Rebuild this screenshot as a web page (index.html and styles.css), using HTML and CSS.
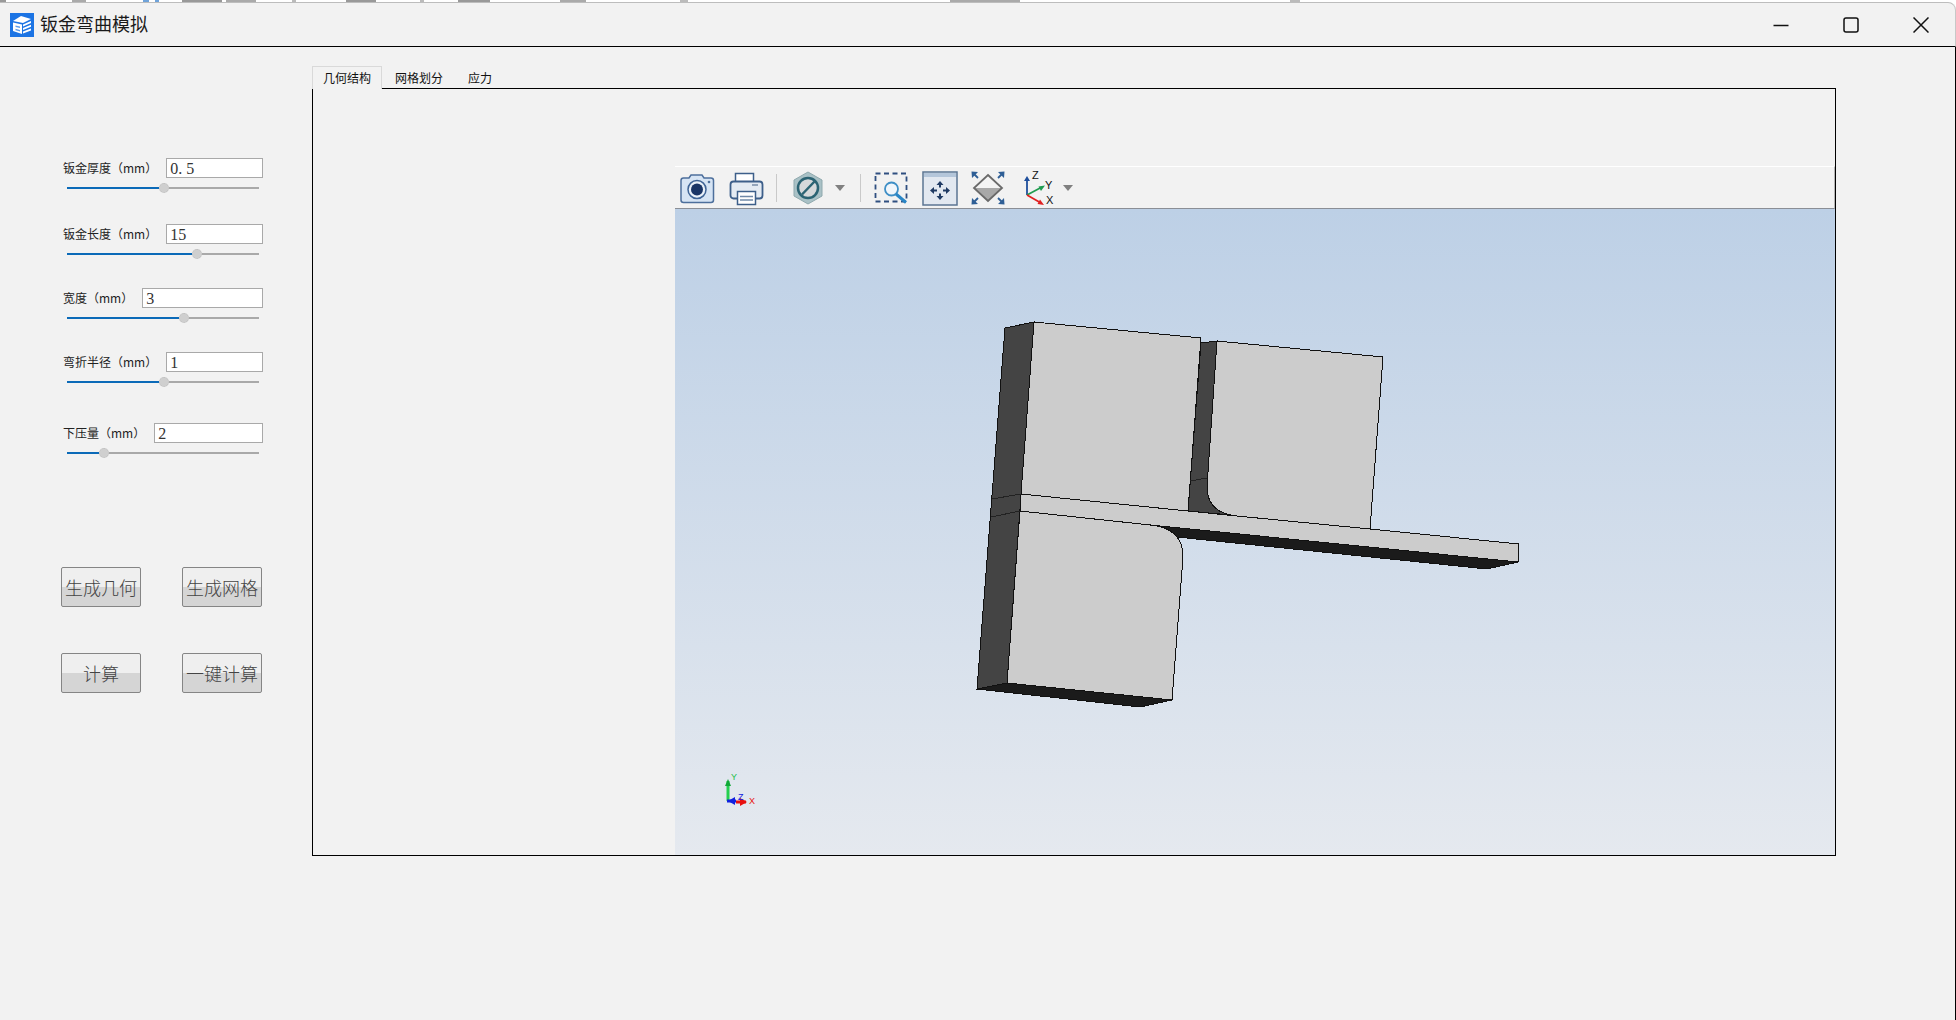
FILE: index.html
```html
<!DOCTYPE html>
<html lang="zh-CN">
<head>
<meta charset="utf-8">
<title>钣金弯曲模拟</title>
<link rel="stylesheet" href="styles.css">
</head>
<body>
<div class="app">
  <svg class="behind" viewBox="0 0 1956 2" preserveAspectRatio="none" aria-hidden="true">
    <rect x="0" width="6" height="2" fill="#999"/><rect x="72" width="14" height="2" fill="#aaa"/>
    <rect x="143" width="6" height="2" fill="#6fa3da"/><rect x="155" width="4" height="2" fill="#6fa3da"/>
    <rect x="182" width="40" height="2" fill="#999"/><rect x="226" width="30" height="2" fill="#aaa"/>
    <rect x="292" width="4" height="2" fill="#bbb"/><rect x="346" width="30" height="2" fill="#999"/>
    <rect x="420" width="4" height="2" fill="#bbb"/><rect x="458" width="32" height="2" fill="#999"/>
    <rect x="560" width="26" height="2" fill="#aaa"/><rect x="680" width="8" height="2" fill="#bbb"/>
    <rect x="950" width="70" height="2" fill="#aaa"/><rect x="1290" width="10" height="2" fill="#bbb"/>
  </svg>
  <header class="titlebar">
    <svg class="app-icon" viewBox="0 0 24 24" aria-hidden="true">
      <rect width="24" height="24" fill="#1c74e4"/>
      <path d="M3 8 L11 3 L21 6 L13 10 Z" fill="#fff"/>
      <path d="M3 9.500 L12 11.500 V21 L3 18 Z" fill="#fff"/>
      <path d="M5.500 12.500 L10 13.500 V15 L5.500 14 Z M5.500 15.800 L10 17 V18.500 L5.500 17.300 Z" fill="#5d9cec"/>
      <path d="M13 11.500 L21 8 V10 L13 13.500 Z M13 15 L21 11.800 V13.800 L13 17 Z M13 18.500 L21 15.500 V17.500 L13 20.500 Z" fill="#fff"/>
    </svg>
    <h1 class="title">钣金弯曲模拟</h1>
    <div class="win-controls">
      <svg class="win-btn" viewBox="0 0 16 16" aria-hidden="true"><path d="M0.500 8.500H15.500" class="win-stroke"/></svg>
      <svg class="win-btn" viewBox="0 0 16 16" aria-hidden="true"><rect x="1" y="1" width="14" height="14" rx="2" class="win-stroke"/></svg>
      <svg class="win-btn" viewBox="0 0 16 16" aria-hidden="true"><path d="M0.500 0.500L15.500 15.500M15.500 0.500L0.500 15.500" class="win-stroke"/></svg>
    </div>
  </header>
  <main class="main">
    <aside class="sidebar">
      <div class="params">
        <section class="param param-first">
          <div class="param-row"><span class="param-label">钣金厚度（mm）</span><span class="field">0. 5</span></div>
          <div class="slider"><span class="slider-fill" style="width:92px"></span><span class="slider-thumb"></span><span class="slider-rest"></span></div>
        </section>
        <section class="param">
          <div class="param-row"><span class="param-label">钣金长度（mm）</span><span class="field">15</span></div>
          <div class="slider"><span class="slider-fill" style="width:125px"></span><span class="slider-thumb"></span><span class="slider-rest"></span></div>
        </section>
        <section class="param">
          <div class="param-row"><span class="param-label">宽度（mm）</span><span class="field">3</span></div>
          <div class="slider"><span class="slider-fill" style="width:112px"></span><span class="slider-thumb"></span><span class="slider-rest"></span></div>
        </section>
        <section class="param param-wide">
          <div class="param-row"><span class="param-label">弯折半径（mm）</span><span class="field">1</span></div>
          <div class="slider"><span class="slider-fill" style="width:92px"></span><span class="slider-thumb"></span><span class="slider-rest"></span></div>
        </section>
        <section class="param">
          <div class="param-row"><span class="param-label">下压量（mm）</span><span class="field">2</span></div>
          <div class="slider"><span class="slider-fill" style="width:32px"></span><span class="slider-thumb"></span><span class="slider-rest"></span></div>
        </section>
      </div>
      <div class="actions">
        <button class="action">生成几何</button>
        <button class="action">生成网格</button>
        <button class="action">计算</button>
        <button class="action">一键计算</button>
      </div>
    </aside>
    <section class="workspace">
      <nav class="tabs">
        <span class="tab tab-active">几何结构</span>
        <span class="tab">网格划分</span>
        <span class="tab">应力</span>
      </nav>
      <div class="pane">
        <div class="viewer">
          <div class="toolbar">
            <svg class="tool" viewBox="0 0 38 38" aria-hidden="true">
              <path d="M3 11.500 Q3 9 5.500 9 H11 L13 6 H24 L26 9 H33 Q35.500 9 35.500 11.500 V31 Q35.500 33.500 33 33.500 H5.500 Q3 33.500 3 31 Z" fill="#d6e4f4" stroke="#4d6f9c" stroke-width="1.500"/>
              <circle cx="19" cy="20.500" r="9" fill="#eaf1f9" stroke="#3f6496" stroke-width="1.500"/>
              <circle cx="19" cy="20.500" r="6" fill="#1a3566"/>
              <circle cx="31" cy="13" r="1.300" fill="#4d6f9c"/>
            </svg>
            <svg class="tool tool-near" viewBox="0 0 38 38" aria-hidden="true">
              <rect x="9.500" y="4.500" width="18" height="11" fill="#fff" stroke="#3d5f8a" stroke-width="1.500"/>
              <rect x="4.500" y="12.500" width="32" height="17" rx="3" fill="#e4ebf3" stroke="#3d5f8a" stroke-width="1.800"/>
              <path d="M26 16H32" stroke="#7a8ea8" stroke-width="1.500"/>
              <rect x="11.500" y="22.500" width="18" height="13" fill="#fff" stroke="#3d5f8a" stroke-width="1.500"/>
              <path d="M14 27.500H27M14 31H27" stroke="#6f89a8" stroke-width="1.500"/>
            </svg>
            <span class="tool-sep"></span>
            <svg class="tool tool-far" viewBox="0 0 38 38" aria-hidden="true">
              <path d="M19 3 L33 11 V27 L19 35 L5 27 V11 Z" fill="#a9c1c6" stroke="#8fa9ae" stroke-width="1"/>
              <circle cx="19" cy="19" r="10" fill="#d5d8da" stroke="#2b6373" stroke-width="2.500"/>
              <path d="M13 25.500 L25.500 12.500" stroke="#2b6373" stroke-width="2.500"/>
            </svg>
            <svg class="caret" viewBox="0 0 10 6" aria-hidden="true"><path d="M0 0H10L5 6Z" fill="#808080"/></svg>
            <span class="tool-sep tool-sep-wide"></span>
            <svg class="tool tool-far" viewBox="0 0 38 38" aria-hidden="true">
              <rect x="2.500" y="4.500" width="31" height="28" fill="none" stroke="#2f4f80" stroke-width="1.800" stroke-dasharray="5 3.500"/>
              <circle cx="18.500" cy="20" r="6.500" fill="#f1f6fb" stroke="#3f8fc6" stroke-width="1.800"/>
              <path d="M23 25 L33 33.500" stroke="#2a86c6" stroke-width="3"/>
            </svg>
            <svg class="tool tool-near" viewBox="0 0 38 38" aria-hidden="true">
              <rect x="2" y="3" width="34" height="33" fill="#e2e8f0" stroke="#5b7593" stroke-width="1.500"/>
              <rect x="3" y="4" width="32" height="4" fill="#b4c6da"/>
              <path d="M19 12 L22.500 16 H20 V18.500 H18 V16 H15.500 Z M19 31 L15.500 27 H18 V24.500 H20 V27 H22.500 Z M9 21.500 L13 18 V20.500 H16 V22.500 H13 V25 Z M29 21.500 L25 25 V22.500 H22 V20.500 H25 V18 Z" fill="#1f3a63"/>
            </svg>
            <svg class="tool tool-near" viewBox="0 0 38 38" aria-hidden="true">
              <path d="M19 6 L33 19 H5 Z" fill="#f4f4f4"/>
              <path d="M5 19 H33 L19 32 Z" fill="#a8a8a8"/>
              <path d="M19 6 L33 19 L19 32 L5 19 Z" fill="none" stroke="#6a6a6a" stroke-width="1.800"/>
              <path d="M2.500 2.500 L9 3 L3 9 Z M35.500 2.500 L29 3 L35 9 Z M2.500 35.500 L3 29 L9 35 Z M35.500 35.500 L35 29 L29 35 Z" fill="#2f5f96"/>
              <path d="M5 5 L9 9 M33 5 L29 9 M5 33 L9 29 M33 33 L29 29" stroke="#2f5f96" stroke-width="1.800"/>
            </svg>
            <svg class="tool tool-mid" viewBox="0 0 38 38" aria-hidden="true">
              <path d="M9 26 V9" stroke="#1f4f9c" stroke-width="1.800"/><path d="M9 7 L12 12 H6 Z" fill="#1f4f9c"/>
              <path d="M9 26 L24 18" stroke="#1f9c4f" stroke-width="1.800"/><path d="M27 16.500 L23 22 L20.500 17.500 Z" fill="#1f9c4f"/>
              <path d="M9 26 L23 34" stroke="#e02020" stroke-width="1.800"/><path d="M26 36 L19.500 35 L22 30.500 Z" fill="#e02020"/>
              <text x="14" y="10" class="axis-label">Z</text>
              <text x="27" y="20" class="axis-label">Y</text>
              <text x="28" y="35" class="axis-label">X</text>
            </svg>
            <svg class="caret caret-axes" viewBox="0 0 10 6" aria-hidden="true"><path d="M0 0H10L5 6Z" fill="#808080"/></svg>
          </div>
          <svg class="scene" viewBox="675 209 1160 646" shape-rendering="crispEdges" aria-hidden="true">
            <defs>
              <linearGradient id="sky" x1="0" y1="0" x2="0" y2="1">
                <stop offset="0" stop-color="#bdd0e6"/>
                <stop offset="1" stop-color="#e5e9ef"/>
              </linearGradient>
            </defs>
            <rect x="675" y="209" width="1160" height="646" fill="url(#sky)"/>
            <g class="edge">
              <path class="face-dark" d="M1005 328 L1034 322 L1007 683 L977 689 Z"/>
              <path class="face-dark" d="M1201 343 L1217 341 L1207 487 Q1209 507 1230 515 L1188 511 Z"/>
              <path class="face-light" d="M1034 322 L1201 338 L1188 511 L1021 494 Z"/>
              <path class="face-light" d="M1217 341 L1383 357 L1370 529 L1237 516 Q1207 513 1207 487 Z"/>
              <path class="face-black" d="M1160 526 L1518 562 L1487 569 L1177 537 Q1172 530 1160 526 Z"/>
              <path class="face-black" d="M1007 683 L1172 700 L1140 707 L977 689 Z"/>
              <path class="face-light" d="M1021 494 L1188 511 L1237 516 L1370 529 L1519 544 L1518 562 L1160 526 L1020 511 Z"/>
              <path class="face-light" d="M1020 511 L1150 525 Q1183 528 1183 557 L1172 700 L1007 683 Z"/>
              <path class="seam" d="M992 499 L1021 494 M991 517 L1020 511 M1190 481 L1207 478"/>
            </g>
            <g class="triad" shape-rendering="auto">
              <path d="M728 801 V781" stroke="#25d050" stroke-width="3"/><path d="M728 779 L731 786 H725 Z" fill="#11a838"/>
              <path d="M727 801 H736" stroke="#1020e0" stroke-width="3"/><path d="M728 801 L735 797 V805 Z" fill="#1020e0"/>
              <path d="M736 802 H746" stroke="#e81010" stroke-width="3"/><path d="M747 802 L740 798 V806 Z" fill="#e81010"/>
              <text x="731" y="780" class="triad-label triad-y">Y</text>
              <text x="738" y="800" class="triad-label triad-z">Z</text>
              <text x="749" y="804" class="triad-label triad-x">X</text>
            </g>
          </svg>
        </div>
      </div>
    </section>
  </main>
</div>
</body>
</html>
```

FILE: styles.css
```css
* { box-sizing: border-box; }

html, body {
  margin: 0;
  height: 100%;
  overflow: hidden;
}

body {
  background: #f2f2f2;
  font-family: "Noto Sans CJK SC", "Noto Sans", sans-serif;
  color: #1a1a1a;
}

.app {
  width: 1956px;
  height: 1020px;
  display: flex;
  flex-direction: column;
  background: #fff;
}

.behind {
  display: block;
  width: 1956px;
  height: 2px;
  flex: none;
}

.titlebar {
  flex: none;
  height: 45px;
  display: flex;
  align-items: center;
  padding-left: 10px;
  background: #f2f2f2;
  border-top: 1px solid #bdbdbd;
  border-right: 1px solid #c8c8c8;
  border-bottom: 1px solid #000;
  border-top-right-radius: 8px;
}

.app-icon {
  width: 24px;
  height: 24px;
  flex: none;
}

.title {
  margin: 0 0 3px 6px;
  font-size: 18px;
  font-weight: 400;
  line-height: 24px;
}

.win-controls {
  margin-left: auto;
  display: flex;
  gap: 54px;
  padding-right: 26px;
  align-items: center;
}

.win-btn {
  width: 16px;
  height: 16px;
  display: block;
}

.win-stroke {
  fill: none;
  stroke: #111;
  stroke-width: 1.500;
}

.main {
  flex: 1;
  display: flex;
  background: #f2f2f2;
  border-right: 1px solid #000;
}

.sidebar {
  width: 312px;
  flex: none;
  padding: 111px 0 0 61px;
}

.params {
  padding-left: 2px;
}

.param {
  width: 200px;
  height: 64px;
}

.param-first { height: 66px; }
.param-wide { height: 71px; }

.param-row {
  display: flex;
  align-items: center;
  gap: 9px;
  height: 20px;
}

.param-label {
  flex: none;
  font-size: 12px;
  line-height: 20px;
  color: #222;
}

.field {
  flex: 1;
  height: 20px;
  background: #fff;
  border: 1px solid #a9a9a9;
  padding-left: 3px;
  font-family: "Liberation Serif", serif;
  font-size: 16px;
  line-height: 20px;
  color: #333;
}

.slider {
  display: flex;
  align-items: center;
  width: 192px;
  height: 10px;
  margin: 5px 0 0 4px;
}

.slider-fill {
  height: 2px;
  background: #0b6ab8;
  flex: none;
}

.slider-thumb {
  width: 10px;
  height: 10px;
  flex: none;
  border-radius: 50%;
  background: #cfcfcf;
  border: 1px dotted #bdbdbd;
}

.slider-rest {
  flex: 1;
  height: 2px;
  background: #a9a9a9;
}

.actions {
  margin-top: 80px;
  display: grid;
  grid-template-columns: 80px 80px;
  grid-auto-rows: 40px;
  column-gap: 41px;
  row-gap: 46px;
}

.action {
  padding: 0;
  border: 1px solid #858585;
  border-radius: 2px;
  background: linear-gradient(#efefef 0, #efefef 50%, #d5d5d5 50%, #d5d5d5 100%);
  font-family: "Noto Sans CJK SC", sans-serif;
  font-size: 18px;
  font-weight: 300;
  line-height: 24px;
  color: #444;
}

.workspace {
  width: 1524px;
  flex: none;
  padding-top: 19px;
}

.tabs {
  display: flex;
  height: 22px;
}

.tab {
  font-size: 12px;
  line-height: 24px;
  padding: 0 0 0 13px;
  width: 73px;
  color: #111;
}

.tab:last-child {
  width: 50px;
}

.tab-active {
  position: relative;
  z-index: 1;
  width: 70px;
  height: 23px;
  padding: 0 0 0 10px;
  background: #f2f2f2;
  border: 1px solid #d9d9d9;
  border-bottom: 0;
  line-height: 22px;
}

.pane {
  height: 768px;
  border: 1px solid #000;
  padding: 77px 0 0 362px;
  display: flex;
}

.viewer {
  flex: 1;
  display: flex;
  flex-direction: column;
}

.toolbar {
  flex: none;
  height: 43px;
  display: flex;
  align-items: center;
  padding-left: 3px;
  background: #f2f2f2;
  border-top: 1px solid #fff;
  border-right: 1px solid #b5b5b5;
  border-bottom: 1px solid #8b8f96;
}

.tool {
  width: 38px;
  height: 38px;
  flex: none;
  display: block;
}

.tool-near { margin-left: 10px; }
.tool-mid { margin-left: 11px; }
.tool-far { margin-left: 12px; }

.tool-sep {
  width: 1px;
  height: 28px;
  flex: none;
  margin-left: 12px;
  background: #c9c9c9;
}

.tool-sep-wide { margin-left: 15px; }

.caret {
  width: 10px;
  height: 6px;
  flex: none;
  margin-left: 8px;
}

.caret-axes { margin-left: 7px; }

.axis-label {
  font-family: "Liberation Sans", sans-serif;
  font-size: 11px;
  fill: #111;
}

.scene {
  flex: 1;
  display: block;
  width: 100%;
  min-height: 0;
}

.edge path {
  stroke: #111;
  stroke-width: 1;
}

.face-dark { fill: #444; }
.face-light { fill: #cccccc; }
.face-black { fill: #1b1b1b; }

.edge .seam {
  fill: none;
  stroke: #222;
}

.triad-label {
  font-family: "Liberation Sans", sans-serif;
  font-size: 9px;
}

.triad-x { fill: #e81010; }
.triad-y { fill: #22c04a; }
.triad-z { fill: #1020e0; }
```
